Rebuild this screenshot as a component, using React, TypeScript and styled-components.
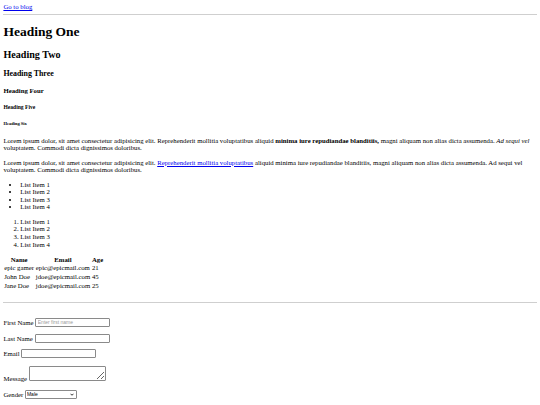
import React from 'react';
import styled, { createGlobalStyle } from 'styled-components';

// a plain document in browser-default look, drawn at about 0.42 of its normal size
const GlobalStyle = createGlobalStyle`
  * {
    box-sizing: border-box;
  }

  body {
    margin: 3.4px;
    font-family: "Liberation Serif", "Times New Roman", serif;
    font-size: 6.75px;
    line-height: 7.6px;
    color: #000;
    background: #fff;
  }
`;

const Nav = styled.nav`
  display: block;
`;

const Link = styled.a`
  color: #0000ee;
  text-decoration: underline;
`;

const Rule = styled.hr<{ $top?: number }>`
  height: 0;
  border: 0;
  border-top: 1px solid #cfcfcf;
  margin: ${(p) => p.$top ?? 3.4}px 0 3.4px;
`;

const H1 = styled.h1`
  font-size: 13.5px;
  line-height: 15.5px;
  font-weight: bold;
  margin: 9px 0;
`;

const H2 = styled.h2`
  font-size: 10.1px;
  line-height: 11.6px;
  font-weight: bold;
  margin: 8.4px 0;
`;

const H3 = styled.h3`
  font-size: 7.9px;
  line-height: 9.1px;
  font-weight: bold;
  margin: 7.9px 0;
`;

const H4 = styled.h4`
  font-size: 6.75px;
  line-height: 7.8px;
  font-weight: bold;
  margin: 9px 0;
`;

const H5 = styled.h5`
  font-size: 5.6px;
  line-height: 6.4px;
  font-weight: bold;
  margin: 9.4px 0;
`;

const H6 = styled.h6`
  font-size: 4.5px;
  line-height: 5.2px;
  font-weight: bold;
  margin: 10.5px 0;
`;

const Paragraph = styled.p`
  margin: 6.75px 0;
`;

const Bullets = styled.ul`
  margin: 6.75px 0;
  padding-left: 16.9px;
  list-style: disc;
`;

const Numbers = styled.ol`
  margin: 6.75px 0;
  padding-left: 16.9px;
  list-style: decimal;
`;

const Table = styled.table`
  border-collapse: separate;
  border-spacing: 1px;
  margin-left: -0.6px;

  th {
    font-weight: bold;
    text-align: center;
    padding: 0 0.4px;
  }

  td {
    padding: 0 0.4px;
    white-space: nowrap;
  }
`;

const Form = styled.form`
  display: block;
  padding-top: 4.5px;
`;

const Field = styled.div<{ $gap?: number }>`
  margin: ${(p) => p.$gap ?? 6.75}px 0 6.75px;
`;

const TextInput = styled.input`
  width: 75px;
  height: 9px;
  padding: 0 1.5px;
  font-family: "Liberation Sans", Arial, sans-serif;
  font-size: 5px;
  color: #000;
  border: 1px solid #8a8a8a;
  border-radius: 1px;
  background: #fff;
  vertical-align: baseline;

  &::placeholder {
    color: #9a9a9a;
  }
`;

const MessageBox = styled.textarea`
  width: 77px;
  height: 15px;
  padding: 1px;
  font-family: "Liberation Mono", monospace;
  font-size: 5.6px;
  border: 1px solid #8a8a8a;
  border-radius: 1px;
  background: #fff;
  resize: both;
  vertical-align: baseline;
`;

const Select = styled.select`
  width: 52px;
  height: 9px;
  padding: 0 0 0 1px;
  font-family: "Liberation Sans", Arial, sans-serif;
  font-size: 5px;
  color: #000;
  border: 1px solid #8a8a8a;
  border-radius: 1px;
  background: #fff;
  appearance: none;
  vertical-align: baseline;
`;

const SelectWrap = styled.span`
  position: relative;
  display: inline-block;
`;

const Chevron = styled.svg`
  position: absolute;
  right: 3px;
  top: 3.2px;
  width: 4px;
  height: 3px;
  pointer-events: none;
`;

type Person = { name: string; email: string; age: number };

const people: Person[] = [
  { name: 'epic gamer', email: 'epic@epicmail.com', age: 21 },
  { name: 'John Doe', email: 'jdoe@epicmail.com', age: 45 },
  { name: 'Jane Doe', email: 'jdoe@epicmail.com', age: 25 },
];

const items = ['List Item 1', 'List Item 2', 'List Item 3', 'List Item 4'];

const App = () => {
  return (
    <>
      <GlobalStyle />
      <Nav>
        <Link href="#blog">Go to blog</Link>
      </Nav>
      <Rule />
      <H1>Heading One</H1>
      <H2>Heading Two</H2>
      <H3>Heading Three</H3>
      <H4>Heading Four</H4>
      <H5>Heading Five</H5>
      <H6>Heading Six</H6>
      <Paragraph>
        Lorem ipsum dolor, sit amet consectetur adipisicing elit. Reprehenderit mollitia
        voluptatibus aliquid <strong>minima iure repudiandae blanditiis,</strong> magni aliquam
        non alias dicta assumenda. <em>Ad sequi vel</em> voluptatem. Commodi dicta dignissimos
        doloribus.
      </Paragraph>
      <Paragraph>
        Lorem ipsum dolor, sit amet consectetur adipisicing elit.{' '}
        <Link href="#more">Reprehenderit mollitia voluptatibus</Link> aliquid minima iure
        repudiandae blanditiis, magni aliquam non alias dicta assumenda. Ad sequi vel voluptatem.
        Commodi dicta dignissimos doloribus.
      </Paragraph>
      <Bullets>
        {items.map((item) => (
          <li key={item}>{item}</li>
        ))}
      </Bullets>
      <Numbers>
        {items.map((item) => (
          <li key={item}>{item}</li>
        ))}
      </Numbers>
      <Table>
        <thead>
          <tr>
            <th>Name</th>
            <th>Email</th>
            <th>Age</th>
          </tr>
        </thead>
        <tbody>
          {people.map((p) => (
            <tr key={p.name}>
              <td>{p.name}</td>
              <td>{p.email}</td>
              <td>{p.age}</td>
            </tr>
          ))}
        </tbody>
      </Table>
      <Rule $top={12} />
      <Form onSubmit={(e) => e.preventDefault()}>
        <Field>
          <label htmlFor="first">First Name</label>{' '}
          <TextInput id="first" type="text" placeholder="Enter first name" />
        </Field>
        <Field>
          <label htmlFor="last">Last Name</label> <TextInput id="last" type="text" />
        </Field>
        <Field>
          <label htmlFor="email">Email</label> <TextInput id="email" type="email" />
        </Field>
        <Field $gap={7.5}>
          <label htmlFor="message">Message</label> <MessageBox id="message" />
        </Field>
        <Field $gap={7.5}>
          <label htmlFor="gender">Gender</label>{' '}
          <SelectWrap>
            <Select id="gender" defaultValue="male">
              <option value="male">Male</option>
              <option value="female">Female</option>
              <option value="other">Other</option>
            </Select>
            <Chevron viewBox="0 0 8 6">
              <path d="M1 1.5 L4 4.5 L7 1.5" fill="none" stroke="#000" strokeWidth="1.6" />
            </Chevron>
          </SelectWrap>
        </Field>
      </Form>
    </>
  );
};

export default App;
